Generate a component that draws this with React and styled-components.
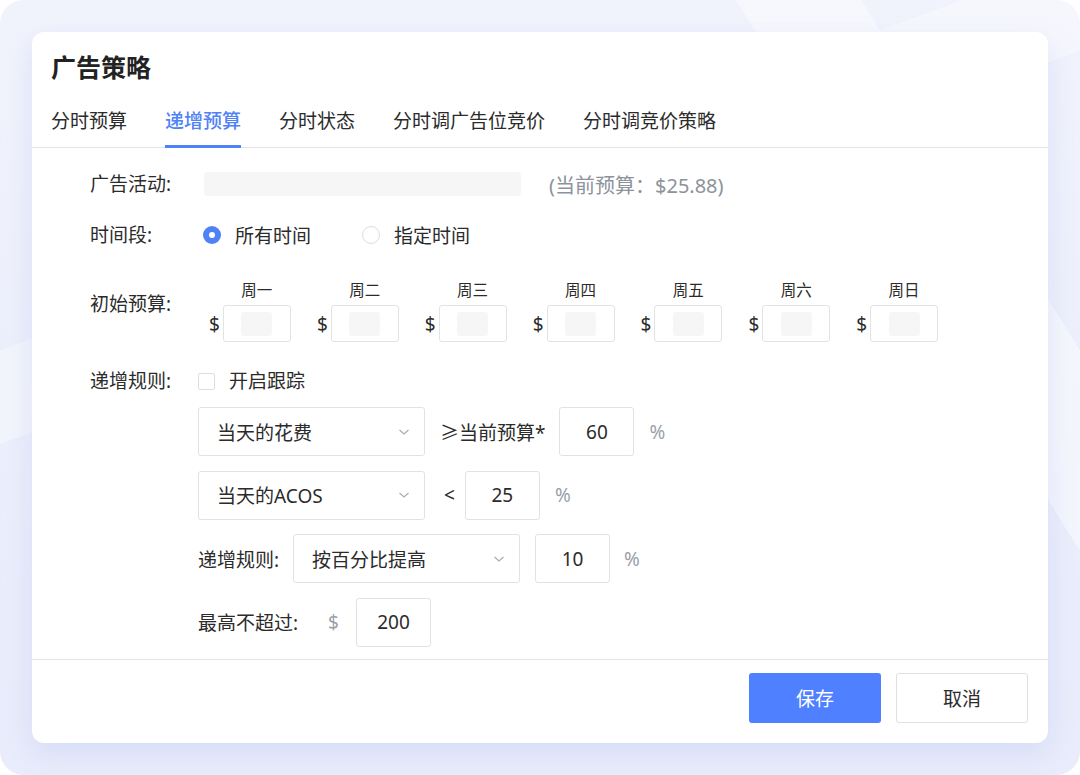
import React from "react";
import styled, { createGlobalStyle } from "styled-components";

const Global = createGlobalStyle`
  html, body { margin: 0; padding: 0; background: #ffffff; }
  * { box-sizing: border-box; }
  body { font-family: "Noto Sans", "Noto Sans CJK SC", sans-serif; color: #2b2b2b; }
`;

const Frame = styled.div`
  width: 1080px;
  height: 775px;
  border-radius: 24px;
  padding: 32px;
  background:
    linear-gradient(58deg, rgba(255,255,255,0) 78%, rgba(255,255,255,0.45) 78%, rgba(255,255,255,0.45) 86%, rgba(255,255,255,0) 86%),
    linear-gradient(160deg, rgba(255,255,255,0) 30%, rgba(255,255,255,0.35) 30%, rgba(255,255,255,0.35) 38%, rgba(255,255,255,0) 38%),
    linear-gradient(180deg, #f1f3fc 0%, #ebeefb 60%, #e8ecfb 100%);
  overflow: hidden;
`;

const Card = styled.div`
  height: 100%;
  background: #ffffff;
  border-radius: 12px;
  box-shadow: 0 10px 28px rgba(120, 138, 220, 0.16);
  display: flex;
  flex-direction: column;
`;

const Header = styled.div`
  padding-top: 19px;
`;

const Title = styled.h1`
  margin: 0 0 0 19px;
  font-size: 25px;
  line-height: 32px;
  font-weight: 700;
  color: #222;
`;

const Tabs = styled.div`
  display: flex;
  gap: 38px;
  margin-top: 25px;
  padding: 0 19px;
  border-bottom: 1px solid #e4e4e4;
`;

const Tab = styled.div`
  font-size: 19px;
  line-height: 26px;
  padding-bottom: 11px;
  margin-bottom: -1px;
  border-bottom: 3px solid ${(p) => (p.$active ? "#4f82f7" : "transparent")};
  color: ${(p) => (p.$active ? "#4f82f7" : "#2b2b2b")};
  font-weight: ${(p) => (p.$active ? 500 : 400)};
`;

const Body = styled.div`
  flex: 1;
  padding: 20px 0 0 58px;
  border-bottom: 1px solid #e4e4e4;
  overflow: hidden;
`;

const Row = styled.div`
  display: flex;
  align-items: ${(p) => p.$align || "center"};
  margin-top: ${(p) => p.$mt || 0}px;
  min-height: 32px;
`;

const Label = styled.div`
  width: 108px;
  flex: none;
  font-size: 19px;
  line-height: 32px;
  color: #2b2b2b;
  margin-top: ${(p) => p.$mt || 0}px;
`;

const CampaignBox = styled.div`
  width: 317px;
  height: 24px;
  margin-left: 6px;
  background: #f6f6f6;
  border-radius: 4px;
`;

const Hint = styled.span`
  margin-left: 28px;
  font-size: 20px;
  color: #8d929b;
`;

const RadioGroup = styled.div`
  display: flex;
  align-items: center;
  margin-left: 5px;
  gap: 51px;
`;

const RadioItem = styled.label`
  display: flex;
  align-items: center;
  gap: 14px;
  font-size: 19px;
  color: #2b2b2b;
`;

const RadioDot = styled.span`
  width: 18px;
  height: 18px;
  border-radius: 50%;
  flex: none;
  background: ${(p) => (p.$checked ? "#4f82f7" : "#fff")};
  border: ${(p) => (p.$checked ? "none" : "1px solid #dedede")};
  display: flex;
  align-items: center;
  justify-content: center;
  &::after {
    content: "";
    width: 6px;
    height: 6px;
    border-radius: 50%;
    background: #fff;
    display: ${(p) => (p.$checked ? "block" : "none")};
  }
`;

const Days = styled.div`
  display: flex;
  gap: 26px;
  margin-left: 11px;
`;

const DayCell = styled.div`
  display: grid;
  grid-template-columns: auto 68px;
  column-gap: 3px;
  row-gap: 5px;
  align-items: center;
`;

const DayName = styled.div`
  grid-column: 2;
  text-align: center;
  font-size: 15.5px;
  line-height: 20px;
  color: #2b2b2b;
`;

const Dollar = styled.span`
  font-size: 19px;
  color: #2b2b2b;
  grid-row: 2;
`;

const DayInput = styled.div`
  grid-row: 2;
  grid-column: 2;
  height: 37px;
  border: 1px solid #e3e3e3;
  border-radius: 3px;
  display: flex;
  align-items: center;
  justify-content: center;
  &::after {
    content: "";
    width: 31px;
    height: 24px;
    border-radius: 3px;
    background: #f6f6f6;
  }
`;

const CheckBox = styled.span`
  width: 17px;
  height: 17px;
  border: 1px solid #dedede;
  border-radius: 2px;
  flex: none;
`;

const CheckLabel = styled.label`
  display: flex;
  align-items: center;
  gap: 14px;
  font-size: 19px;
  line-height: 24px;
`;

const Rules = styled.div`
  margin-left: 108px;
  margin-top: 10px;
  display: flex;
  flex-direction: column;
  gap: 14.5px;
`;

const RuleRow = styled.div`
  display: flex;
  align-items: center;
  height: 49px;
`;

const Select = styled.div`
  width: 227px;
  height: 49px;
  border: 1px solid #e2e2e2;
  border-radius: 3px;
  padding: 0 14px 0 18px;
  display: flex;
  align-items: center;
  justify-content: space-between;
  font-size: 19px;
  color: #2b2b2b;
  margin-left: ${(p) => p.$ml || 0}px;
`;

const NumBox = styled.div`
  width: 75px;
  height: 49px;
  border: 1px solid #e2e2e2;
  border-radius: 3px;
  display: flex;
  align-items: center;
  justify-content: center;
  font-size: 19px;
  color: #2b2b2b;
  margin-left: ${(p) => p.$ml || 0}px;
`;

const Text = styled.span`
  font-size: 19px;
  color: ${(p) => (p.$muted ? "#9aa0aa" : "#2b2b2b")};
  margin-left: ${(p) => p.$ml || 0}px;
`;

const Footer = styled.div`
  display: flex;
  justify-content: flex-end;
  gap: 15px;
  padding: 13px 20px 20px;
`;

const Button = styled.button`
  width: 132px;
  height: 50px;
  border-radius: 3px;
  font-family: inherit;
  font-size: 19px;
  cursor: pointer;
  background: ${(p) => (p.$primary ? "#4f80ff" : "#fff")};
  color: ${(p) => (p.$primary ? "#fff" : "#2b2b2b")};
  border: ${(p) => (p.$primary ? "none" : "1px solid #e0e0e0")};
`;

const Chevron = () => (
  <svg width="12" height="8" viewBox="0 0 12 8" fill="none">
    <polyline points="1.5,2 6,6 10.5,2" stroke="#a8adb5" strokeWidth="1.2" fill="none" />
  </svg>
);

const days = ["周一", "周二", "周三", "周四", "周五", "周六", "周日"];
const tabs = ["分时预算", "递增预算", "分时状态", "分时调广告位竞价", "分时调竞价策略"];

export default function App() {
  return (
    <>
      <Global />
      <Frame>
        <Card>
          <Header>
            <Title>广告策略</Title>
            <Tabs>
              {tabs.map((t, i) => (
                <Tab key={t} $active={i === 1}>{t}</Tab>
              ))}
            </Tabs>
          </Header>
          <Body>
            <Row>
              <Label>广告活动:</Label>
              <CampaignBox />
              <Hint>(当前预算：$25.88)</Hint>
            </Row>
            <Row $mt={19}>
              <Label>时间段:</Label>
              <RadioGroup>
                <RadioItem><RadioDot $checked />所有时间</RadioItem>
                <RadioItem><RadioDot />指定时间</RadioItem>
              </RadioGroup>
            </Row>
            <Row $mt={29} $align="flex-start">
              <Label $mt={8}>初始预算:</Label>
              <Days>
                {days.map((d) => (
                  <DayCell key={d}>
                    <DayName>{d}</DayName>
                    <Dollar>$</Dollar>
                    <DayInput />
                  </DayCell>
                ))}
              </Days>
            </Row>
            <Row $mt={23}>
              <Label>递增规则:</Label>
              <CheckLabel><CheckBox />开启跟踪</CheckLabel>
            </Row>
            <Rules>
              <RuleRow>
                <Select>当天的花费<Chevron /></Select>
                <Text $ml={15}>≥当前预算*</Text>
                <NumBox $ml={14}>60</NumBox>
                <Text $muted $ml={15}>%</Text>
              </RuleRow>
              <RuleRow>
                <Select>当天的ACOS<Chevron /></Select>
                <Text $ml={19}>&lt;</Text>
                <NumBox $ml={10}>25</NumBox>
                <Text $muted $ml={15}>%</Text>
              </RuleRow>
              <RuleRow>
                <Text>递增规则:</Text>
                <Select $ml={14}>按百分比提高<Chevron /></Select>
                <NumBox $ml={15}>10</NumBox>
                <Text $muted $ml={14}>%</Text>
              </RuleRow>
              <RuleRow>
                <Text>最高不超过:</Text>
                <Text $muted $ml={30}>$</Text>
                <NumBox $ml={17}>200</NumBox>
              </RuleRow>
            </Rules>
          </Body>
          <Footer>
            <Button $primary>保存</Button>
            <Button>取消</Button>
          </Footer>
        </Card>
      </Frame>
    </>
  );
}
